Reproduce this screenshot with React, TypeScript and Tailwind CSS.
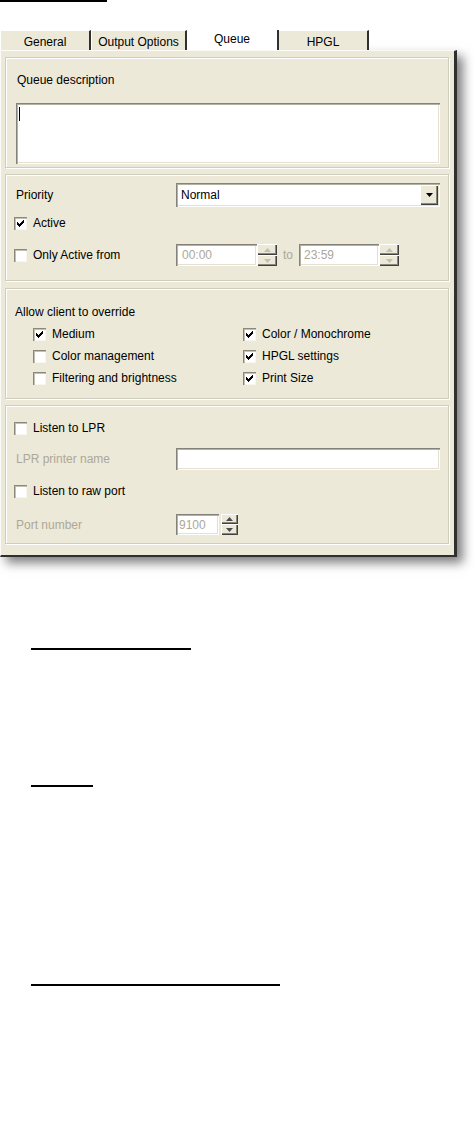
import React from "react";

const sunken =
  "bg-white shadow-[inset_1px_1px_0_#85827a,inset_2px_2px_0_#b3b0a4,inset_-1px_-1px_0_#ffffff,inset_-2px_-2px_0_#e4e1d4]";
const raised =
  "bg-[#ECE9D8] shadow-[inset_1px_1px_0_#ffffff,inset_-1px_-1px_0_#404040,inset_-2px_-2px_0_#8a877c]";
const group =
  "box-border border border-[#cfcdbf] shadow-[inset_1px_1px_0_#ffffff,1px_1px_0_#ffffff]";

function Check({ checked }: { checked?: boolean }) {
  return (
    <div className="w-[13px] h-[13px] shrink-0 bg-white shadow-[inset_1px_1px_0_#8a877b,inset_2px_2px_0_#c4c1b4,inset_-1px_-1px_0_#f7f6f0] flex items-center justify-center">
      {checked && (
        <svg width="7" height="7" viewBox="0 0 7 7" shapeRendering="crispEdges">
          <rect x="6" y="0" width="1" height="3" fill="#000" />
          <rect x="5" y="1" width="1" height="3" fill="#000" />
          <rect x="4" y="2" width="1" height="3" fill="#000" />
          <rect x="3" y="3" width="1" height="3" fill="#000" />
          <rect x="2" y="4" width="1" height="3" fill="#000" />
          <rect x="1" y="3" width="1" height="3" fill="#000" />
          <rect x="0" y="2" width="1" height="3" fill="#000" />
        </svg>
      )}
    </div>
  );
}

function CheckRow({ label, checked }: { label: string; checked?: boolean }) {
  return (
    <div className="flex items-center h-[16px]">
      <Check checked={checked} />
      <span className="ml-[6px] leading-[14px]">{label}</span>
    </div>
  );
}

function Spinner({ w, h, enabled }: { w: number; h: number; enabled?: boolean }) {
  const c = enabled ? "#4d4d4d" : "#c2bfb2";
  const half = Math.floor(h / 2);
  return (
    <div className="flex flex-col shrink-0" style={{ width: w, height: h }}>
      <div className={`${raised} flex items-center justify-center`} style={{ height: half }}>
        <svg width="7" height="4" viewBox="0 0 7 4">
          <path d="M3.5 0 L7 4 L0 4 Z" fill={c} />
        </svg>
      </div>
      <div className={`${raised} flex items-center justify-center`} style={{ height: h - half }}>
        <svg width="7" height="4" viewBox="0 0 7 4">
          <path d="M0 0 L7 0 L3.5 4 Z" fill={c} />
        </svg>
      </div>
    </div>
  );
}

export default function App() {
  return (
    <div className="w-[475px] h-[1122px] bg-white text-[12px] text-black font-['Liberation_Sans',Arial,sans-serif] overflow-hidden">
      <div className="h-[2px] w-[107px] bg-black" />

      {/* Tabs */}
      <div className="mt-[28px] flex h-[20px] w-[457px]">
        <div className="w-[91px] h-[20px] bg-[#ECE9D8] border-t border-l border-t-white border-l-white border-r-2 border-r-[#303030] flex items-center justify-center pt-[2px]">
          General
        </div>
        <div className="w-[96px] h-[20px] bg-[#ECE9D8] border-t border-l border-t-white border-l-white border-r-2 border-r-[#303030] flex items-center justify-center pt-[2px]">
          Output Options
        </div>
        <div className="w-[92px] h-[20px] bg-white border-r-2 border-r-[#303030] flex items-center justify-center pb-[3px]">
          Queue
        </div>
        <div className="w-[90px] h-[20px] bg-[#ECE9D8] border-t border-t-white border-r-2 border-r-[#303030] flex items-center justify-center pt-[2px]">
          HPGL
        </div>
      </div>

      {/* Panel */}
      <div className="box-border w-[457px] h-[507px] bg-[#ECE9D8] border-l border-t border-l-[#fbfbf8] border-t-[#fbfbf8] border-r-[3px] border-b-[2px] border-r-[#2f2f2f] border-b-[#2f2f2f] shadow-[6px_6px_10px_rgba(0,0,0,0.5)] pt-[6px] pl-[4px] pr-[5px]">
        {/* Group 1 */}
        <div className={`${group} h-[111px] pt-[15px] pl-[10px]`}>
          <div className="ml-[1px] leading-[14px]">Queue description</div>
          <div className={`${sunken} mt-[16px] h-[61px] w-[424px] relative`}>
            <div className="absolute left-[3px] top-[4px] w-[1px] h-[14px] bg-black" />
          </div>
        </div>

        {/* Group 2 */}
        <div className={`${group} mt-[6px] h-[107px] pt-[8px] pl-[8px]`}>
          <div className="flex items-center h-[24px]">
            <span className="ml-[2px] w-[160px] leading-[14px]">Priority</span>
            <div className={`${sunken} w-[264px] h-[24px] flex items-center justify-between pl-[5px] pr-[2px]`}>
              <span>Normal</span>
              <div className={`${raised} w-[18px] h-[20px] flex items-center justify-center`}>
                <svg width="7" height="4" viewBox="0 0 7 4">
                  <path d="M0 0 L7 0 L3.5 4 Z" fill="#000" />
                </svg>
              </div>
            </div>
          </div>
          <div className="mt-[8px]">
            <CheckRow label="Active" checked />
          </div>
          <div className="mt-[13px] flex items-center h-[22px]">
            <div className="w-[162px] flex items-center">
              <Check />
              <span className="ml-[6px] leading-[14px]">Only Active from</span>
            </div>
            <div className={`${sunken} w-[81px] h-[22px] flex items-center pl-[6px] text-[#aca899]`}>00:00</div>
            <Spinner w={20} h={22} />
            <span className="ml-[6px] text-[#aca899]">to</span>
            <div className={`${sunken} ml-[6px] w-[80px] h-[22px] flex items-center pl-[5px] text-[#aca899]`}>23:59</div>
            <Spinner w={20} h={22} />
          </div>
        </div>

        {/* Group 3 */}
        <div className={`${group} mt-[7px] h-[111px] pt-[16px] pl-[9px]`}>
          <div className="leading-[14px]">Allow client to override</div>
          <div className="mt-[4px] grid grid-cols-[210px_1fr] ml-[18px]">
            <div className="h-[22px] flex items-center"><CheckRow label="Medium" checked /></div>
            <div className="h-[22px] flex items-center"><CheckRow label="Color / Monochrome" checked /></div>
            <div className="h-[22px] flex items-center"><CheckRow label="Color management" /></div>
            <div className="h-[22px] flex items-center"><CheckRow label="HPGL settings" checked /></div>
            <div className="h-[22px] flex items-center"><CheckRow label="Filtering and brightness" /></div>
            <div className="h-[22px] flex items-center"><CheckRow label="Print Size" checked /></div>
          </div>
        </div>

        {/* Group 4 */}
        <div className={`${group} mt-[6px] h-[139px] pt-[14px] pl-[8px]`}>
          <CheckRow label="Listen to LPR" />
          <div className="mt-[12px] flex items-center h-[22px]">
            <span className="ml-[2px] w-[160px] text-[#aca899] leading-[14px]">LPR printer name</span>
            <div className={`${sunken} w-[264px] h-[22px]`} />
          </div>
          <div className="mt-[13px]">
            <CheckRow label="Listen to raw port" />
          </div>
          <div className="mt-[15px] flex items-center h-[21px]">
            <span className="ml-[2px] w-[160px] text-[#aca899] leading-[14px]">Port number</span>
            <div className={`${sunken} w-[43px] h-[21px] flex items-center pl-[3px] text-[#aca899]`}>9100</div>
            <div className="ml-[2px]">
              <Spinner w={17} h={21} enabled />
            </div>
          </div>
        </div>
      </div>

      {/* Document underlines */}
      <div className="ml-[31px] mt-[91px] h-[2px] w-[160px] bg-black" />
      <div className="ml-[31px] mt-[135px] h-[2px] w-[62px] bg-black" />
      <div className="ml-[31px] mt-[197px] h-[2px] w-[249px] bg-black" />
    </div>
  );
}
